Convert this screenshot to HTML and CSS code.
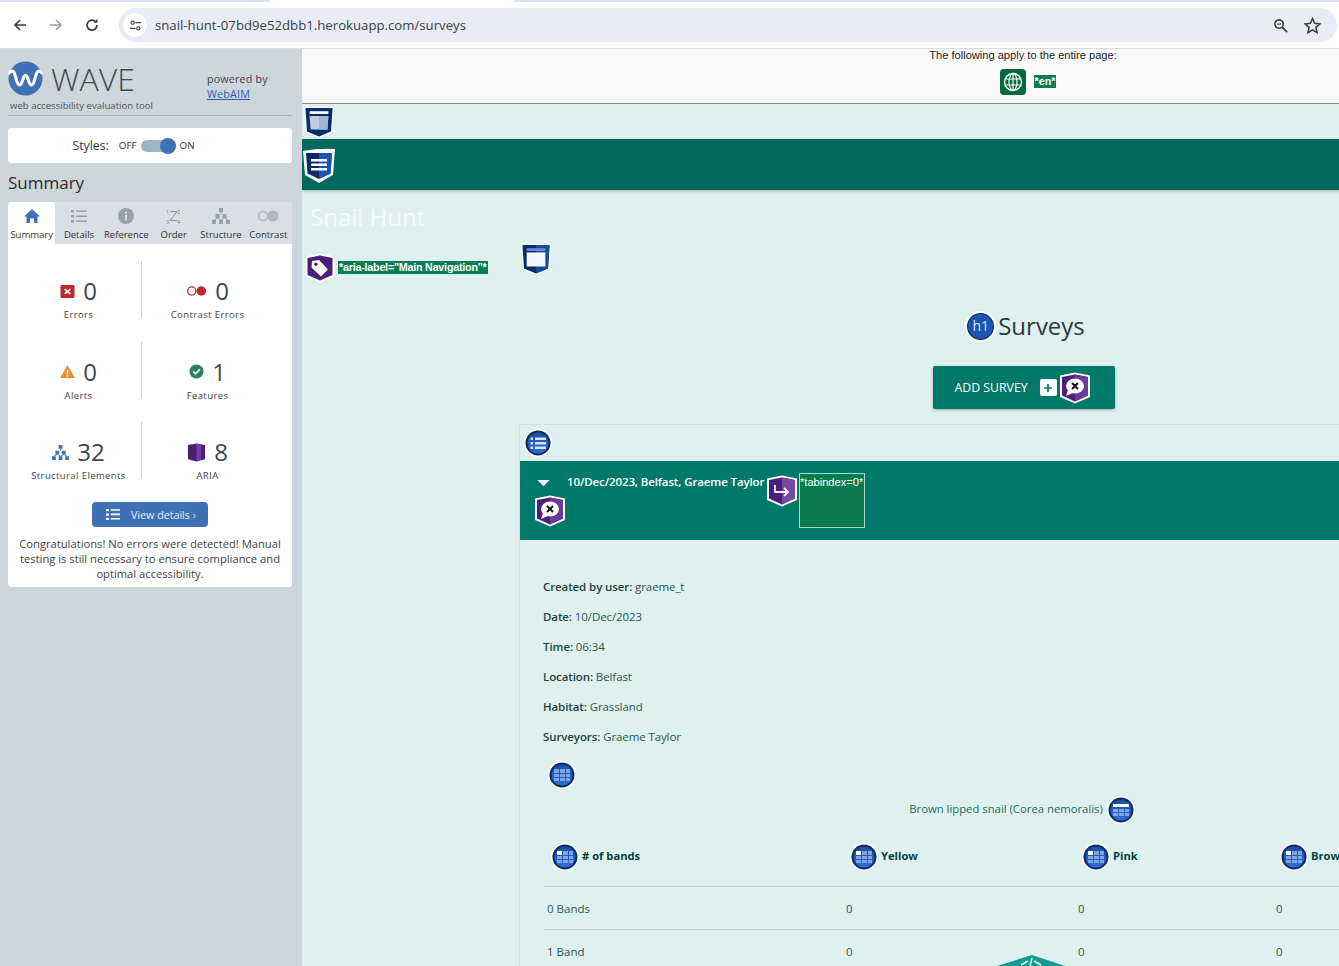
FILE: index.html
```html
<!DOCTYPE html>
<html lang="en">
<head>
<meta charset="utf-8">
<title>Surveys</title>
<link rel="stylesheet" href="styles.css">
</head>
<body>
<svg class="defs" aria-hidden="true">
  <defs>
    <linearGradient id="blueg" x1="0" y1="0" x2="0" y2="1"><stop offset="0" stop-color="#1a4ea0"/><stop offset="1" stop-color="#2f6fd0"/></linearGradient>
  </defs>
  <symbol id="s-header" viewBox="0 0 32 34">
    <path d="M0.500 1 H31.500 L30 28 L16 34 L2 28Z" fill="#fff"/>
    <path d="M1.500 2 H30.500 L28.800 27 L16 32.500 L3.200 27Z" fill="#0b2a6b"/>
    <path d="M6 5.500 H26 V8.500 H6Z" fill="#fff"/>
    <path d="M6 10.500 H26 L25 25 H7Z" fill="#bfcbe0"/>
    <path d="M16 10.500 H26 L25 25 H16Z" fill="#a4b4d6"/>
  </symbol>
  <symbol id="s-footer" viewBox="0 0 32 34">
    <path d="M0.500 1 H31.500 L30 28 L16 34 L2 28Z" fill="#fff"/>
    <path d="M1.500 2 H30.500 L28.800 27 L16 32.500 L3.200 27Z" fill="#0b2a6b"/>
    <path d="M16 2 H30.500 L28.800 27 L16 32.500Z" fill="#1a4a98"/>
    <path d="M6 5.500 H26 V8.500 H6Z" fill="#5f8fd8"/>
    <path d="M6 10 H26 V25 H6Z" fill="#f4f7fb"/>
  </symbol>
  <symbol id="s-nav" viewBox="0 0 34 36">
    <path d="M1 3 Q17 0 33 1 L31 27 L17 35 L3 27Z" fill="#fff"/>
    <path d="M4 5 H30 L28.500 25.500 L17 31 L5.500 25.500Z" fill="#0b2a6b"/>
    <path d="M17 5 H30 L28.500 25.500 L17 31Z" fill="#1a56b4"/>
    <path d="M9 11 H25 V13.500 H9Z M9 15.500 H25 V18 H9Z M9 20 H25 V22.500 H9Z" fill="#fff"/>
  </symbol>
  <symbol id="s-tag" viewBox="0 0 30 30">
    <path d="M15 0.500 L29.500 3.500 V23.500 L15 29.800 L0.500 23.500 V3.500Z" fill="#fff"/>
    <path d="M15 2.500 L27.500 5 V22 L15 27.500 L2.500 22 V5Z" fill="#4b1f78"/>
    <path d="M7 8 L14 7 L23 16.500 L16 23.500 L6.500 14.500Z" fill="#fff"/>
    <circle cx="10.800" cy="11.300" r="1.700" fill="#4b1f78"/>
  </symbol>
  <symbol id="s-chat" viewBox="0 0 32 32">
    <path d="M16 0.500 L31 3.500 V25 L16 31.500 L1 25 V3.500Z" fill="#fff"/>
    <path d="M16 2.500 L29 5 V23.500 L16 29.500 L3 23.500 V5Z" fill="#4b1f78"/>
    <path d="M16 2.500 L29 5 V23.500 L16 29.500Z" fill="#6a3a9a"/>
    <ellipse cx="16" cy="14" rx="9" ry="7.500" fill="#fff"/>
    <path d="M9 18 L7 24 L14 21Z" fill="#fff"/>
    <path d="M13 11 L19 17 M19 11 L13 17" stroke="#111" stroke-width="2"/>
  </symbol>
  <symbol id="s-arrow" viewBox="0 0 32 32">
    <path d="M16 0.500 L31 3.500 V25 L16 31.500 L1 25 V3.500Z" fill="#fff"/>
    <path d="M16 2.500 L29 5 V23.500 L16 29.500 L3 23.500 V5Z" fill="#4b1f78"/>
    <path d="M16 2.500 L29 5 V23.500 L16 29.500Z" fill="#77489f"/>
    <path d="M9 10 V17 H22 M18 13 L22 17 L18 21" fill="none" stroke="#f2e9f7" stroke-width="1.800"/>
  </symbol>
  <symbol id="c-list" viewBox="0 0 28 28">
    <circle cx="14" cy="14" r="14" fill="#fff"/>
    <circle cx="14" cy="14" r="12.500" fill="#0b2a6b"/>
    <circle cx="14" cy="14" r="10.500" fill="url(#blueg)"/>
    <path d="M11 8.500 H22 V11 H11Z M11 13 H22 V15.500 H11Z M11 17.500 H22 V20 H11Z M6.500 8.500 H9 V11 H6.500Z M6.500 13 H9 V15.500 H6.500Z M6.500 17.500 H9 V20 H6.500Z" fill="#d5e2f7"/>
  </symbol>
  <symbol id="c-table" viewBox="0 0 28 28">
    <circle cx="14" cy="14" r="14" fill="#fff"/>
    <circle cx="14" cy="14" r="12.500" fill="#0b2a6b"/>
    <circle cx="14" cy="14" r="10.500" fill="url(#blueg)"/>
    <path d="M6 8 H11 V12 H6Z M12 8 H17 V12 H12Z M18 8 H22 V12 H18Z M6 13 H11 V16 H6Z M12 13 H17 V16 H12Z M18 13 H22 V16 H18Z M6 17 H11 V20 H6Z M12 17 H17 V20 H12Z M18 17 H22 V20 H18Z" fill="#7ea4e4"/>
  </symbol>
  <symbol id="c-th" viewBox="0 0 28 28">
    <circle cx="14" cy="14" r="14" fill="#fff"/>
    <circle cx="14" cy="14" r="12.500" fill="#0b2a6b"/>
    <circle cx="14" cy="14" r="10.500" fill="url(#blueg)"/>
    <path d="M12 8 H17 V12 H12Z M18 8 H22 V12 H18Z M6 13 H11 V16 H6Z M12 13 H17 V16 H12Z M18 13 H22 V16 H18Z M6 17 H11 V20 H6Z M12 17 H17 V20 H12Z M18 17 H22 V20 H18Z" fill="#7ea4e4"/>
    <path d="M6 8 H11 V12 H6Z" fill="#fff"/>
  </symbol>
  <symbol id="c-caption" viewBox="0 0 28 28">
    <circle cx="14" cy="14" r="14" fill="#fff"/>
    <circle cx="14" cy="14" r="12.500" fill="#0b2a6b"/>
    <circle cx="14" cy="14" r="10.500" fill="url(#blueg)"/>
    <path d="M6 8 H22 V11 H6Z" fill="#fff"/>
    <path d="M6 13 H11 V16 H6Z M12 13 H17 V16 H12Z M18 13 H22 V16 H18Z M6 17 H11 V20 H6Z M12 17 H17 V20 H12Z M18 17 H22 V20 H18Z" fill="#7ea4e4"/>
  </symbol>
  <symbol id="i-struct" viewBox="0 0 18 16">
    <path d="M7 0 H11 V4 H7Z M3.500 6 H7.500 V10 H3.500Z M10.500 6 H14.500 V10 H10.500Z M0 12 H4 V16 H0Z M7 12 H11 V16 H7Z M14 12 H18 V16 H14Z"/>
    <path d="M9 4 V6 M5.500 10 L2 12 M5.500 10 L9 12 M12.500 10 L9 12 M12.500 10 L16 12" stroke="currentColor" fill="none"/>
  </symbol>
</svg>

<header class="chrome">
  <div class="tabline"><span class="tabline-a"></span><span class="tabline-b"></span></div>
  <div class="toolbar">
    <svg class="tb-icon" viewBox="0 0 16 16"><path d="M14 8 H3 M8 3 L3 8 L8 13" fill="none" stroke="#3c4043" stroke-width="1.700"/></svg>
    <svg class="tb-icon tb-muted" viewBox="0 0 16 16"><path d="M2 8 H13 M8 3 L13 8 L8 13" fill="none" stroke="#9aa0a6" stroke-width="1.700"/></svg>
    <svg class="tb-icon" viewBox="0 0 16 16"><path d="M13 8 A5 5 0 1 1 11.500 4.500" fill="none" stroke="#3c4043" stroke-width="1.700"/><path d="M9.500 5.800 H13.500 V1.800Z" fill="#3c4043"/></svg>
    <div class="omnibox">
      <span class="tune"><svg viewBox="0 0 16 16"><circle cx="4.500" cy="4.500" r="2" fill="none" stroke="#3c4043" stroke-width="1.400"/><path d="M8 4.500 H15 M1 11.500 H8" stroke="#3c4043" stroke-width="1.600"/><circle cx="11.500" cy="11.500" r="2" fill="none" stroke="#3c4043" stroke-width="1.400"/></svg></span>
      <span class="url">snail-hunt-07bd9e52dbb1.herokuapp.com/surveys</span>
      <svg class="om-icon" viewBox="0 0 16 16"><circle cx="6.500" cy="6.500" r="4.500" fill="none" stroke="#3c4043" stroke-width="1.700"/><path d="M10 10 L15 15" stroke="#3c4043" stroke-width="2"/><path d="M4.500 6.500 H8.500" stroke="#3c4043" stroke-width="1.300"/></svg>
      <svg class="om-icon om-star" viewBox="0 0 16 16"><path d="M8 1.500 L10 6 L15 6.500 L11.200 9.800 L12.300 14.700 L8 12.100 L3.700 14.700 L4.800 9.800 L1 6.500 L6 6Z" fill="none" stroke="#3c4043" stroke-width="1.500"/></svg>
    </div>
  </div>
</header>

<div class="layout">
  <aside class="wave">
    <div class="brand">
      <div class="brand-left">
        <div class="logo-row">
          <svg class="logo" viewBox="0 0 36 36"><circle cx="18" cy="18" r="17.500" fill="#3f72b5"/><path d="M0.500 13 C5 8 6 10 8 17 C10 26 13 27 15 20 C17 13 19 13 21 20 C23 27 26 26 28 17 C30 10 31 8 35.500 13" fill="none" stroke="#fff" stroke-width="3.200"/></svg>
          <span class="wave-name">WAVE</span>
        </div>
        <div class="tagline">web accessibility evaluation tool</div>
      </div>
      <div class="powered">powered by<br><a href="#" class="webaim">WebAIM</a></div>
    </div>
    <div class="styles-card">
      <span class="styles-label">Styles:</span>
      <span class="sw-text">OFF</span>
      <span class="switch"><span class="knob"></span></span>
      <span class="sw-text">ON</span>
    </div>
    <h2 class="sum-title">Summary</h2>
    <nav class="tabs">
      <div class="tab tab-active"><svg viewBox="0 0 16 16"><path d="M8 1 L16 8.500 H13.500 V15 H10 V10.500 H6 V15 H2.500 V8.500 H0Z" fill="#3f72b5"/></svg><span>Summary</span></div>
      <div class="tab"><svg viewBox="0 0 16 16"><path d="M0 2 H3 V4.500 H0Z M0 7 H3 V9.500 H0Z M0 12 H3 V14.500 H0Z M5 2.500 H16 V4 H5Z M5 7.500 H16 V9 H5Z M5 12.500 H16 V14 H5Z" fill="#98a3a8"/></svg><span>Details</span></div>
      <div class="tab"><svg viewBox="0 0 16 16"><circle cx="8" cy="8" r="8" fill="#98a3a8"/><path d="M7 7 H9 V12.500 H7Z M7 3.500 H9 V5.500 H7Z" fill="#d9e0e3"/></svg><span>Reference</span></div>
      <div class="tab"><svg viewBox="0 0 16 16"><text x="0" y="5.500" class="mini">1</text><text x="11" y="5.500" class="mini">2</text><text x="0" y="15.500" class="mini">3</text><text x="11" y="15.500" class="mini">4</text><path d="M4 3.500 H11 L4 12.500 H11" fill="none" stroke="#7d898e" stroke-width="0.900"/></svg><span>Order</span></div>
      <div class="tab"><svg class="tab-struct" viewBox="0 0 18 16"><use href="#i-struct"/></svg><span>Structure</span></div>
      <div class="tab"><svg class="tab-contrast" viewBox="0 0 22 12"><circle cx="6" cy="6" r="4.500" fill="none" stroke="#b0babe" stroke-width="1.500"/><circle cx="16" cy="6" r="5.500" fill="#b0babe"/></svg><span>Contrast</span></div>
    </nav>
    <section class="panel">
      <div class="stats">
        <div class="stat">
          <div class="stat-top"><svg class="st-icon" viewBox="0 0 16 16"><rect x="0.500" y="1" width="15" height="14" rx="1.500" fill="#c1272d"/><path d="M5 5.500 L11 10.500 M11 5.500 L5 10.500" stroke="#fff" stroke-width="1.800"/></svg><span class="num">0</span></div>
          <div class="stat-label">Errors</div>
        </div>
        <div class="stat stat-right">
          <div class="stat-top"><svg class="st-icon st-wide" viewBox="0 0 22 12"><circle cx="6" cy="6" r="4.300" fill="none" stroke="#c1272d" stroke-width="1.400"/><circle cx="16" cy="6" r="5" fill="#c1272d"/></svg><span class="num">0</span></div>
          <div class="stat-label">Contrast Errors</div>
        </div>
        <div class="stat">
          <div class="stat-top"><svg class="st-icon" viewBox="0 0 16 16"><path d="M8 1 L16 15 H0Z" fill="#e8912d"/><path d="M7.200 6 H8.800 V11 H7.200Z M7.200 12 H8.800 V13.500 H7.200Z" fill="#fff"/></svg><span class="num">0</span></div>
          <div class="stat-label">Alerts</div>
        </div>
        <div class="stat stat-right">
          <div class="stat-top"><svg class="st-icon" viewBox="0 0 16 16"><circle cx="8" cy="8" r="7.500" fill="#2c8062"/><path d="M4.500 8 L7 10.500 L11.500 5.800" fill="none" stroke="#fff" stroke-width="1.800"/></svg><span class="num">1</span></div>
          <div class="stat-label">Features</div>
        </div>
        <div class="stat">
          <div class="stat-top"><svg class="st-icon st-struct" viewBox="0 0 18 16"><use href="#i-struct"/></svg><span class="num">32</span></div>
          <div class="stat-label">Structural Elements</div>
        </div>
        <div class="stat stat-right">
          <div class="stat-top"><svg class="st-icon st-aria" viewBox="0 0 20 20"><path d="M1 2 L10 0.500 L19 2 V17 L10 19.500 L1 17Z" fill="#4b1f78"/><path d="M10 0.500 L15 2 V17 L10 19.500Z" fill="#6c3f9e"/></svg><span class="num">8</span></div>
          <div class="stat-label">ARIA</div>
        </div>
      </div>
      <a href="#" class="view-btn"><svg viewBox="0 0 16 14"><path d="M0 1 H3 V3.500 H0Z M0 5.800 H3 V8.300 H0Z M0 10.500 H3 V13 H0Z M5 1.300 H15 V3 H5Z M5 6 H15 V7.700 H5Z M5 10.800 H15 V12.500 H5Z" fill="#fff"/></svg><span>View details ›</span></a>
      <p class="congrats">Congratulations! No errors were detected! Manual testing is still necessary to ensure compliance and optimal accessibility.</p>
    </section>
  </aside>

  <main class="viewport">
    <div class="page">
      <div class="apply">
        <div class="apply-text">The following apply to the entire page:</div>
        <div class="apply-row">
          <span class="globe"><svg viewBox="0 0 20 20"><circle cx="10" cy="10" r="8.500" fill="none" stroke="#fff" stroke-width="1.500"/><ellipse cx="10" cy="10" rx="4" ry="8.500" fill="none" stroke="#fff" stroke-width="1.200"/><path d="M2 7 H18 M2 13 H18 M10 1.500 V18.500" stroke="#fff" stroke-width="1.200"/></svg></span>
          <span class="wave-tag lang-tag">*en*</span>
        </div>
      </div>
      <div class="slot-top"><svg class="ic-shield"><use href="#s-header"/></svg></div>
      <div class="navbar"><svg class="ic-nav"><use href="#s-nav"/></svg></div>
      <div class="brand-title">Snail Hunt</div>
      <div class="nav-row">
        <svg class="ic-tag"><use href="#s-tag"/></svg>
        <span class="wave-tag nav-label">*aria-label="Main Navigation"*</span>
        <svg class="ic-shield ic-foot"><use href="#s-footer"/></svg>
      </div>
      <h1 class="page-title"><span class="h1-badge">h1</span>Surveys</h1>
      <div class="add-wrap">
        <a href="#" class="add-btn">ADD SURVEY
          <span class="plus"><svg viewBox="0 0 10 10"><path d="M5 1 V9 M1 5 H9" stroke="#00796b" stroke-width="1.700"/></svg></span>
          <svg class="ic-chat ic-chat-add"><use href="#s-chat"/></svg>
        </a>
      </div>
      <section class="accordion">
        <div class="acc-list"><svg class="ic-circle"><use href="#c-list"/></svg></div>
        <div class="acc-head">
          <div class="acc-left">
            <div class="acc-row">
              <svg class="caret" viewBox="0 0 14 8"><path d="M0 0 H14 L7 7Z" fill="#fff"/></svg>
              <span class="acc-title">10/Dec/2023, Belfast, Graeme Taylor</span>
              <svg class="ic-chat ic-arrow"><use href="#s-arrow"/></svg>
            </div>
            <svg class="ic-chat"><use href="#s-chat"/></svg>
          </div>
          <div class="tabindex">*tabindex=0*</div>
        </div>
        <div class="acc-body">
          <p class="fact"><b>Created by user:</b> graeme_t</p>
          <p class="fact"><b>Date:</b> 10/Dec/2023</p>
          <p class="fact"><b>Time:</b> 06:34</p>
          <p class="fact"><b>Location:</b> Belfast</p>
          <p class="fact"><b>Habitat:</b> Grassland</p>
          <p class="fact"><b>Surveyors:</b> Graeme Taylor</p>
          <div class="table-mark"><svg class="ic-circle"><use href="#c-table"/></svg></div>
          <table class="bands">
            <caption>Brown lipped snail (Corea nemoralis) <svg class="ic-circle"><use href="#c-caption"/></svg></caption>
            <colgroup><col class="c1"><col class="c2"><col class="c3"><col class="c4"></colgroup>
            <thead>
              <tr>
                <th><svg class="ic-circle"><use href="#c-th"/></svg># of bands</th>
                <th><svg class="ic-circle"><use href="#c-th"/></svg>Yellow</th>
                <th><svg class="ic-circle"><use href="#c-th"/></svg>Pink</th>
                <th><svg class="ic-circle"><use href="#c-th"/></svg>Brown</th>
              </tr>
            </thead>
            <tbody>
              <tr><td>0 Bands</td><td>0</td><td>0</td><td>0</td></tr>
              <tr><td>1 Band</td><td>0</td><td>0</td><td>0</td></tr>
            </tbody>
          </table>
        </div>
      </section>
      <svg class="ic-peek" viewBox="0 0 68 12"><path d="M0 11 L35 0 L68 11 V12 H0Z" fill="#0f9d8e"/><path d="M24 10 L31 6 M44 10 L37 6 M35 3 L33 11" stroke="#e3f3f0" stroke-width="1.500"/></svg>
    </div>
  </main>
</div>
</body>
</html>
```
FILE: styles.css
```css
* { box-sizing: border-box; }
html, body { margin: 0; height: 966px; overflow: hidden; }
body { font-family: "Open Sans", sans-serif; background: #fff; color: #333; }
.defs { position: absolute; width: 0; height: 0; }
p, h1, h2 { margin: 0; }

/* browser chrome */
.chrome { height: 49px; background: #fff; border-bottom: 1px solid #d9dadc; }
.tabline { height: 2px; display: flex; }
.tabline-a { width: 270px; background: #d3e3fd; border-bottom-right-radius: 2px; }
.tabline-b { margin-left: 245px; flex: 1; background: #d3e3fd; }
.toolbar { height: 34px; margin-top: 6px; display: flex; align-items: center; padding-left: 12px; padding-right: 2px; }
.tb-icon { width: 16px; height: 16px; margin-right: 20px; flex: none; }
.omnibox { flex: 1; height: 34px; margin-left: -1px; background: #e9ecf6; border-radius: 17px; display: flex; align-items: center; padding-left: 4px; padding-right: 16px; }
.tune { width: 24px; height: 24px; border-radius: 50%; background: #fff; display: flex; align-items: center; justify-content: center; flex: none; }
.tune svg { width: 13px; height: 13px; }
.url { margin-left: 8px; font-size: 13.200px; color: #3c4043; flex: 1; }
.om-icon { width: 15px; height: 15px; flex: none; }
.om-star { width: 17px; height: 17px; margin-left: 16px; }

.layout { display: flex; height: 917px; }

/* WAVE sidebar */
.wave { width: 302px; flex: none; background: #cdd6da; padding: 0 10px 0 8px; height: 917px; }
.brand { height: 67px; border-bottom: 1px solid #aab3b8; display: flex; }
.brand-left { width: 199px; padding-top: 12px; }
.logo-row { display: flex; align-items: center; height: 35px; }
.logo { width: 35px; height: 35px; flex: none; }
.wave-name { margin-left: 8px; font-size: 32px; font-weight: 300; color: #464a4d; line-height: 35px; }
.tagline { margin: 3px 0 0 2px; font-size: 9.600px; color: #555; line-height: 13px; white-space: nowrap; }
.powered { padding-top: 23px; font-size: 10.700px; color: #444; line-height: 15px; letter-spacing: 0.200px; }
.webaim { color: #2d5bb5; }
.styles-card { margin-top: 12px; height: 35px; background: #fff; border-radius: 3px; display: flex; align-items: center; justify-content: center; padding-right: 33px; }
.styles-label { font-size: 12.300px; color: #333; margin-right: 10px; }
.sw-text { font-size: 9.800px; color: #333; }
.switch { width: 35px; height: 12px; margin: 0 4px; background: #9db6c4; border-radius: 6px; position: relative; }
.knob { position: absolute; right: 0; top: -2px; width: 16px; height: 16px; border-radius: 50%; background: #3f72b5; }
.sum-title { font-size: 17px; font-weight: 400; color: #2c2c2c; line-height: 22px; margin-top: 9px; height: 30px; }
.tabs { height: 42px; background: #d9e0e3; border-radius: 3px 3px 0 0; display: grid; grid-template-columns: repeat(6, 1fr); }
.tab { display: flex; flex-direction: column; align-items: center; padding-top: 6px; font-size: 9.500px; color: #333; line-height: 12px; white-space: nowrap; }
.tab svg { width: 16px; height: 16px; margin-bottom: 5px; flex: none; }
.tab-active { background: #fff; border-radius: 3px 3px 0 0; }
.tab .tab-struct { width: 18px; color: #98a3a8; fill: #98a3a8; }
.tab .tab-contrast { width: 22px; }
.mini { font-size: 5.500px; fill: #7d898e; }
.panel { background: #fff; height: 343px; border-radius: 0 0 4px 4px; padding-top: 17px; display: flex; flex-direction: column; align-items: center; }
.stats { width: 100%; display: grid; grid-template-columns: 133px 1fr; grid-auto-rows: 57px; row-gap: 23.500px; }
.stat { display: flex; flex-direction: column; align-items: center; padding-top: 17px; padding-left: 8px; }
.stat-right { border-left: 1px solid #cdd2d5; padding-left: 0; padding-right: 19px; }
.stat-top { height: 26px; display: flex; align-items: center; gap: 8px; }
.st-icon { width: 15px; height: 15px; flex: none; }
.st-wide { width: 21px; height: 12px; }
.st-struct { width: 17px; color: #3f72b5; fill: #3f72b5; }
.st-aria { width: 19px; height: 19px; }
.num { font-size: 24px; color: #3d4650; line-height: 26px; font-weight: 400; }
.stat-label { font-size: 9.500px; letter-spacing: 0.400px; color: #444; line-height: 13px; margin-top: 4px; white-space: nowrap; }
.view-btn { margin-top: 23px; width: 116px; height: 25px; background: #3f72b5; border-radius: 4px; display: flex; align-items: center; padding-left: 14px; gap: 10px; color: #e4ecf6; font-size: 10.700px; text-decoration: none; flex: none; }
.view-btn svg { width: 15px; height: 13px; flex: none; }
.congrats { margin-top: 9px; padding: 0 6px; font-size: 11.200px; line-height: 15px; text-align: center; color: #444; }

/* page under test */
.viewport { flex: 1; height: 917px; overflow: hidden; background: #dff1ee; }
.page { width: 1442px; position: relative; height: 917px; color: #2d4a47; }
.apply { height: 55px; background: #fafafa; border-bottom: 1px solid #868a8a; text-align: center; font-family: "Liberation Sans", sans-serif; font-size: 11.100px; color: #222; }
.apply-text { line-height: 13px; }
.apply-row { margin-top: 7px; display: flex; justify-content: center; align-items: center; gap: 8px; padding-left: 10px; }
.globe { width: 26px; height: 26px; background: #00693e; border-radius: 4px; display: flex; align-items: center; justify-content: center; }
.globe svg { width: 20px; height: 20px; }
.wave-tag { background: #0a7d55; color: #fff; font-family: "Liberation Sans", sans-serif; font-weight: 700; font-size: 10.700px; line-height: 13px; padding: 0 1px; }
.lang-tag { margin-bottom: 2px; }
.slot-top { height: 35px; padding: 2px 0 0 2px; }
.ic-shield { width: 30px; height: 32px; display: block; }
.navbar { height: 51px; background: #00695c; padding-top: 9px; box-shadow: 0 1px 3px rgba(0,0,0,.25); }
.ic-nav { width: 34px; height: 36px; display: block; }
.brand-title { margin-top: 12px; padding-left: 8px; font-size: 24px; line-height: 30px; color: #f4fbfa; }
.nav-row { display: flex; align-items: flex-start; height: 66px; padding-left: 3px; margin-top: 11px; }
.ic-tag { width: 30px; height: 30px; margin-top: 10px; flex: none; }
.nav-label { margin: 18px 0 0 3px; letter-spacing: -0.200px; }
.ic-foot { margin: 0 0 0 33px; }
.page-title { font-size: 24px; font-weight: 400; color: #2b3a3d; height: 34px; line-height: 32px; display: flex; align-items: center; justify-content: center; padding-left: 5px; }
.h1-badge { width: 29px; height: 29px; border-radius: 50%; background: #1a56ae; border: 2px solid #0b2a6b; outline: 2px solid #fff; outline-offset: -1px; color: #d8e4f7; font-size: 14px; font-weight: 400; display: flex; align-items: center; justify-content: center; margin-right: 3px; flex: none; }
.add-wrap { margin-top: 23px; display: flex; justify-content: center; padding-left: 1px; }
.add-btn { width: 182px; height: 43px; background: #00796b; border-radius: 2px; box-shadow: 0 1px 3px rgba(0,0,0,.3); display: flex; align-items: center; padding-left: 22px; color: #fff; font-size: 12.300px; text-decoration: none; white-space: nowrap; }
.plus { width: 17px; height: 17px; background: #fff; border-radius: 2px; margin-left: 12px; display: flex; align-items: center; justify-content: center; flex: none; }
.plus svg { width: 10px; height: 10px; }
.ic-chat { width: 32px; height: 32px; display: block; flex: none; }
.ic-chat-add { margin-left: 2px; }
.accordion { margin: 16px 0 0 218px; width: 1006px; box-shadow: 0 -1px 1px #cfe5e1, -1px 0 1px #cfe5e1; }
.acc-list { height: 36px; padding: 4px 0 0 4px; }
.ic-circle { width: 28px; height: 28px; display: block; flex: none; }
.acc-head { height: 79px; background: #00796b; display: flex; padding: 12px 0 0 14px; }
.acc-left { width: 265px; }
.acc-row { display: flex; align-items: flex-start; height: 22px; padding-top: 2px; }
.caret { width: 13px; height: 7px; margin: 5px 0 0 3px; flex: none; }
.acc-title { margin-left: 17px; color: #fff; font-size: 11.500px; letter-spacing: -0.120px; font-weight: 600; line-height: 14px; white-space: nowrap; }
.ic-arrow { margin: 0 0 0 2px; }
.tabindex { width: 66px; height: 55px; background: #097a4b; border: 1px solid #a7d8cc; font-family: "Liberation Sans", sans-serif; font-size: 11.100px; color: #fff; line-height: 17px; white-space: nowrap; }
.acc-body { padding: 32px 0 0 24px; }
.fact { height: 30px; line-height: 30px; font-size: 11.500px; letter-spacing: -0.100px; color: #2d5552; margin-left: -1px; }
.fact b { font-weight: 600; color: #23423f; }
.table-mark { height: 39px; padding: 9px 0 0 4px; margin-left: 0; }
.bands { width: 956px; table-layout: fixed; border-collapse: collapse; font-size: 11.500px; }
.bands caption { height: 40px; display: table-caption; text-align: center; color: #1c6a60; font-size: 11.300px; line-height: 36px; }
.bands caption .ic-circle { display: inline-block; vertical-align: middle; margin-left: 1px; }
.c1 { width: 299px; }
.c2 { width: 232px; }
.c3 { width: 198px; }
.bands th { height: 55px; text-align: left; padding: 0 0 3px 7px; font-size: 11.200px; font-weight: 700; color: #04423e; white-space: nowrap; border-bottom: 1px solid #bcd1ce; }
.bands th .ic-circle { display: inline-block; vertical-align: middle; margin-right: 3px; }
.bands td { height: 43px; padding: 1px 0 0 3px; color: #2d5552; border-bottom: 1px solid #bcd1ce; }
.ic-peek { position: absolute; left: 695px; top: 906px; width: 68px; height: 12px; }
```
